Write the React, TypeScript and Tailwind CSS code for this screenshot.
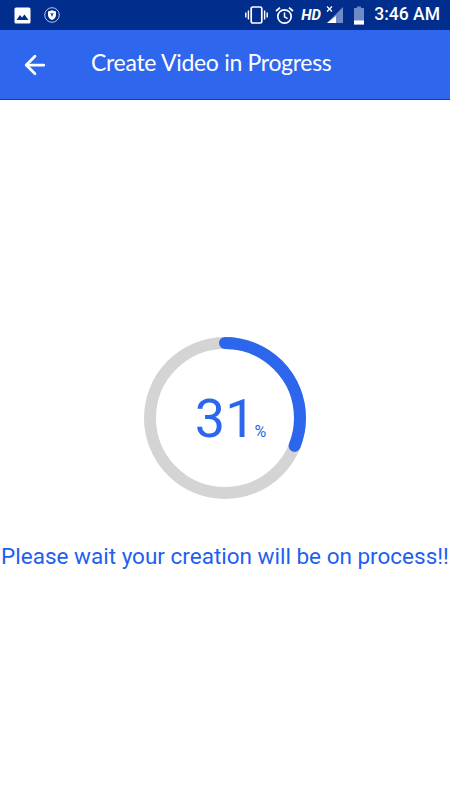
import { ArrowLeft } from "lucide-react";

function StatusBar() {
  return (
    <div className="flex h-[30px] items-center bg-[#012d8c] pl-[14px] pr-[10px] text-white">
      <svg width="17" height="17" viewBox="0 0 17 17">
        <rect x="0.5" y="0.5" width="16" height="16" rx="1.5" fill="#fff" />
        <path d="M2.5 13 L6 8 L8 10.5 L10.5 7.5 L14.5 13 Z" fill="#012d8c" />
      </svg>
      <svg className="ml-[13px]" width="16" height="16" viewBox="0 0 16 16">
        <circle cx="8" cy="8" r="7.3" fill="none" stroke="#c9d4ee" strokeWidth="0.9" />
        <path d="M8 3.2 L12 4.6 V8 C12 10.6 10 12.2 8 13 C6 12.2 4 10.6 4 8 V4.6 Z" fill="#fff" />
        <path d="M6.4 6 L8 10 L9.6 6 H8.6 L8 7.8 L7.4 6 Z" fill="#012d8c" />
      </svg>
      <div className="ml-auto flex items-center">
        <svg width="23" height="18" viewBox="0 0 23 18" fill="none" stroke="#fff">
          <rect x="6.2" y="1" width="10.6" height="16" rx="1.6" strokeWidth="1.7" />
          <path d="M3.4 4.5 V13.5 M0.8 6.5 V11.5 M19.6 4.5 V13.5 M22.2 6.5 V11.5" strokeWidth="1.4" />
        </svg>
        <svg className="ml-[7px]" width="19" height="19" viewBox="0 0 19 19" fill="none" stroke="#fff">
          <circle cx="9.5" cy="10.5" r="6.7" strokeWidth="1.7" />
          <path d="M9.5 6.5 V10.8 L12.6 12.6" strokeWidth="1.5" />
          <path d="M1 5 L5 1.6 M18 5 L14 1.6" strokeWidth="1.8" />
        </svg>
        <span className="ml-[7px] w-[19px] font-['Roboto',sans-serif] text-[15px] leading-none font-bold italic">HD</span>
        <svg className="ml-[6px]" width="18" height="20" viewBox="0 0 18 20">
          <path d="M17 2 V18 H1 Z" fill="#6f8ac6" />
          <path d="M10 11 V18 H1 Z" fill="#fff" />
          <path d="M1 1.5 L6 6.5 M6 1.5 L1 6.5" stroke="#fff" strokeWidth="1.3" />
        </svg>
        <svg className="ml-[9px]" width="12" height="19" viewBox="0 0 12 19">
          <path d="M4 0.5 H8 V2 H11 V18.5 H1 V2 H4 Z" fill="#6f8ac6" />
          <rect x="1" y="14.5" width="10" height="4" fill="#fff" />
        </svg>
        <span className="ml-[9px] font-['Roboto',sans-serif] text-[17.5px] leading-none font-medium">3:46 AM</span>
      </div>
    </div>
  );
}

export default function App() {
  const r = 75;
  const c = 2 * Math.PI * r;
  return (
    <div className="flex h-[800px] w-[450px] flex-col bg-white">
      <StatusBar />
      <header className="flex h-[70px] items-center border-b border-[#0d3fc4] bg-[#2f66ee] pl-[20px] text-white">
        <ArrowLeft size={30} strokeWidth={2.2} />
        <h1 className="mb-[4px] ml-[41px] font-['Lato',sans-serif] text-[23px] leading-none font-normal tracking-[-0.3px]">Create Video in Progress</h1>
      </header>
      <main className="flex flex-col items-center pt-[236px]">
        <div className="relative h-[164px] w-[164px]">
          <svg width="164" height="164" viewBox="0 0 164 164">
            <circle cx="82" cy="82" r={r} fill="none" stroke="#d4d4d4" strokeWidth="12" />
            <circle
              cx="82"
              cy="82"
              r={r}
              fill="none"
              stroke="#2b66ec"
              strokeWidth="12"
              strokeLinecap="round"
              strokeDasharray={`${c * 0.31} ${c}`}
              transform="rotate(-90 82 82)"
            />
          </svg>
          <div className="absolute inset-0 flex items-baseline justify-center pt-[51px] pl-[11px] font-['Roboto',sans-serif] text-[#2b66ec]">
            <span className="text-[54px] leading-[64px]">31</span>
            <span className="-ml-[1px] text-[16px] leading-none">%</span>
          </div>
        </div>
        <p className="mt-[42px] font-['Roboto',sans-serif] text-[22.5px] leading-[28px] whitespace-nowrap text-[#1f5ff0]">
          Please wait your creation will be on process!!
        </p>
      </main>
    </div>
  );
}
